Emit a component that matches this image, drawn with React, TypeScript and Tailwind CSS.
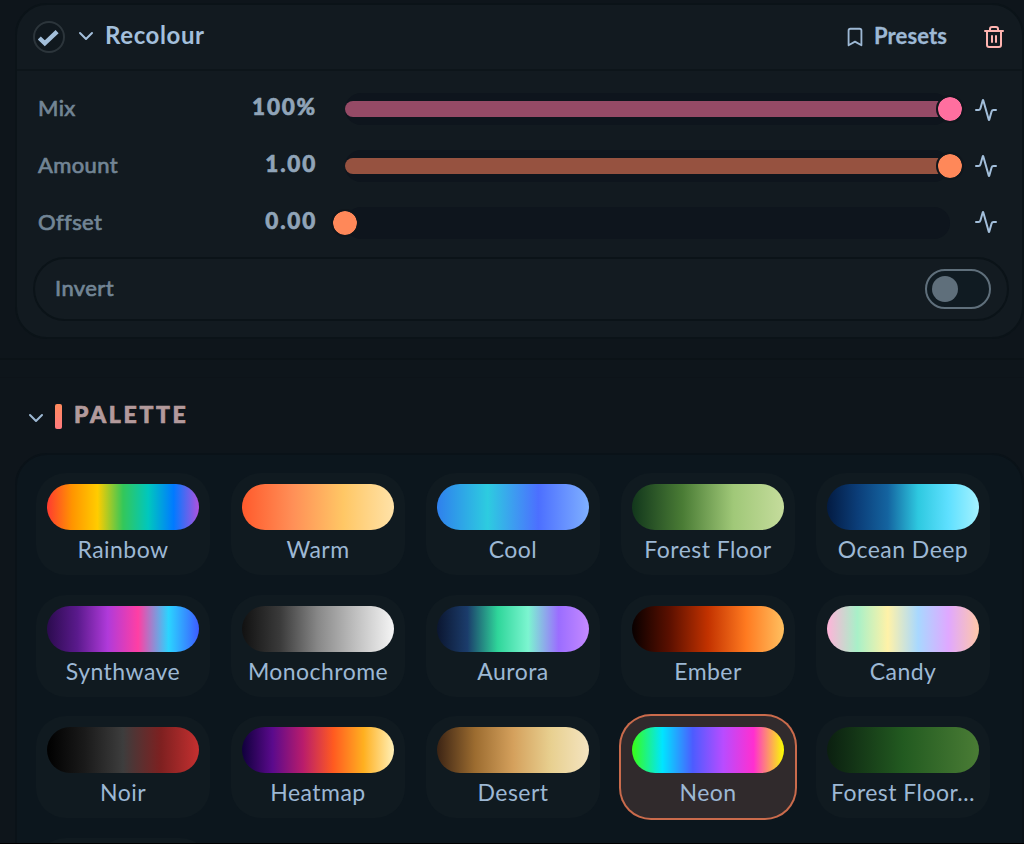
import React from 'react';
import { Activity, Bookmark, ChevronDown, Trash2 } from 'lucide-react';

const sliders = [
  { label: 'Mix', value: '100%', percent: 100, fill: 'bg-[#954a66]', thumb: 'bg-[#ff6f9f]' },
  { label: 'Amount', value: '1.00', percent: 100, fill: 'bg-[#965240]', thumb: 'bg-[#ff8859]' },
  { label: 'Offset', value: '0.00', percent: 0, fill: 'bg-[#965240]', thumb: 'bg-[#ff8859]' },
];

const palettes = [
  { name: 'Rainbow', colors: ['#ff3b30', '#ff9500', '#ffcc00', '#34c759', '#00c7be', '#007aff', '#af52de'] },
  { name: 'Warm', colors: ['#ff5a2c', '#ff8f57', '#ffc765', '#ffe2a8'] },
  { name: 'Cool', colors: ['#2f80ed', '#2dcce0', '#4c6fff', '#7fb0ff'] },
  { name: 'Forest Floor', colors: ['#12371c', '#4a7c35', '#a0c878', '#c5dc9c'] },
  { name: 'Ocean Deep', colors: ['#031b42', '#0b3d78', '#1464a0', '#2ec9e0', '#5fe0ff', '#a5f2ff'] },
  { name: 'Synthwave', colors: ['#2b0b4e', '#5a1a8c', '#b03ada', '#ff3fa4', '#2bd4ff', '#3d5cff'] },
  { name: 'Monochrome', colors: ['#111111', '#3a3a3a', '#888888', '#c0c0c0', '#f5f5f5'] },
  { name: 'Aurora', colors: ['#0b1630', '#1b3c6b', '#2fd69a', '#7cf5d0', '#9b6dff', '#c58aff'] },
  { name: 'Ember', colors: ['#080000', '#5c1000', '#c23200', '#ff7a20', '#ffc060'] },
  { name: 'Candy', colors: ['#ffb3d9', '#a8f0c8', '#fff2a8', '#a8d8ff', '#e0a8ff', '#ffc8a8'] },
  { name: 'Noir', colors: ['#000000', '#1a1a1a', '#3d3d3d', '#7e2020', '#c53030'] },
  { name: 'Heatmap', colors: ['#10003c', '#5a0a8c', '#b81c6c', '#ff5a20', '#ffb020', '#fff0b8'] },
  { name: 'Desert', colors: ['#3c2414', '#9c6c30', '#d4a05c', '#e8d090', '#f4e4c0'] },
  { name: 'Neon', colors: ['#39ff14', '#00e5ff', '#4c5cff', '#b84cff', '#ff2fd0', '#faff00'], selected: true },
  { name: 'Forest Floor…', colors: ['#0b1f10', '#225a20', '#4a7c35'] },
];

const SliderRow = ({ label, value, percent, fill, thumb }) => {
  return (
    <div className="flex items-center h-[57px]">
      <div className="w-[198px] pb-0.5 text-[22px] tracking-[0.4px] text-[#728595] [-webkit-text-stroke:0.7px_#728595]">
        {label}
      </div>
      <div className="w-[81px] pb-[3px] text-right text-[22.5px] font-black tracking-[1.8px] text-[#90a4b8] [-webkit-text-stroke:0.6px_#90a4b8]">
        {value}
      </div>
      <div className="ml-[28px] flex items-center w-[605px] h-8 rounded-full bg-[#0e151d]">
        <div className={`h-4 shrink-0 rounded-l-full ${fill}`} style={{ width: `${percent}%` }} />
        <div className={`-ml-3.5 box-content size-6 shrink-0 rounded-full border-2 border-[#10161c] ${thumb} bg-clip-padding`} />
      </div>
    </div>
  );
};

const PaletteCard = ({ name, colors, selected = false }) => {
  return (
    <div
      className={`h-[102px] px-[11px] pt-[11px] rounded-[30px] ${
        selected ? 'bg-[#302a2c] ring-2 ring-[#ca6b4c]' : 'bg-[#101a20]'
      }`}
    >
      <div
        className="h-[46px] rounded-full"
        style={{ backgroundImage: `linear-gradient(to right, ${colors.join(', ')})` }}
      />
      <div className="mt-[5px] whitespace-nowrap text-center text-[23px] leading-7 tracking-[0.45px] text-[#9db8d4]">
        {name}
      </div>
    </div>
  );
};

export default function App() {
  return (
    <div className="flex flex-col w-[1024px] h-[844px] overflow-hidden border-b border-black bg-[#0e151b] font-['Lato','Open_Sans',sans-serif]">
      <div className="h-[360px] shrink-0 pl-[15px] pt-[3px] border-b-2 border-[#0b1217]">
        <div className="h-[336px] rounded-[32px] border-2 border-[#0b1318] bg-[#121a20]">
          {/* header */}
          <div className="flex items-center h-[66px] pl-4 pr-[18px] border-b-2 border-[#0d151a]">
            <div className="flex items-center justify-center size-8 rounded-full border-2 border-[#2c353b] bg-[#10181e]">
              <svg width="22" height="22" viewBox="0 0 22 22" fill="none" stroke="#a3bfdb" strokeWidth="4.4" className="shrink-0">
                <path d="M1.3 12 6.8 17.3 19.1 5.6" />
              </svg>
            </div>
            <ChevronDown className="ml-[9px] -mt-0.5 text-[#a3bfdb]" size={24} />
            <div className="ml-[7px] pb-1 text-2xl font-bold tracking-[0.6px] text-[#a3bfdb]">Recolour</div>
            <div className="flex items-center ml-auto text-[#9db8d4]">
              <Bookmark size={22} />
              <span className="ml-2 pb-[3px] text-[22px] font-bold tracking-[0.1px] [-webkit-text-stroke:0.3px_#9db8d4]">Presets</span>
            </div>
            <Trash2 className="ml-[35px] -mr-0.5 text-[#ffb4b0]" size={24} />
          </div>
          <div className="flex pl-[21px] pt-[9px]">
            <div>
              {sliders.map((item) => (
                <SliderRow key={item.label} {...item} />
              ))}
            </div>
            <div className="flex flex-col gap-8 ml-6 pt-[18px] text-[#a3bfdb]">
              {sliders.map((item) => (
                <Activity key={item.label} size={24} />
              ))}
            </div>
          </div>
          <div className="flex items-center justify-between h-16 ml-4 mr-[13px] mt-1.5 pl-5 pr-4 rounded-full border-2 border-[#0b1318] bg-[#131b21]">
            <span className="pb-1 text-[22px] tracking-[0.4px] text-[#728595] [-webkit-text-stroke:0.7px_#728595]">Invert</span>
            <div className="flex items-center w-[66px] h-10 pl-[5px] rounded-full border-2 border-[#5f6f7b] bg-[#101b22]">
              <div className="size-[26px] rounded-full bg-[#5f6f7b]" />
            </div>
          </div>
        </div>
      </div>

      <div className="flex items-center h-[76px] mt-[17px] shrink-0 pl-6 border-t border-[#0d1319]">
        <ChevronDown className="mt-1 text-[#9db8d4]" size={24} />
        <div className="ml-[7px] mt-0.5 w-[7px] h-[25px] rounded-[2px] bg-linear-to-b from-[#ff8a5c] to-[#ff7a7e]" />
        <div className="ml-3 pb-[3px] text-[23px] font-black tracking-[2.7px] text-[#b39a9c] [-webkit-text-stroke:0.7px_#b39a9c]">
          PALETTE
        </div>
      </div>

      <div className="ml-[15px] h-[440px] shrink-0 pl-[19px] pt-[18px] rounded-[32px] border-2 border-[#0a1218] bg-[#0c161d]">
        <div className="grid grid-cols-[repeat(5,174px)] gap-x-[21px] gap-y-[19.5px]">
          {palettes.map((item) => (
            <PaletteCard key={item.name} {...item} />
          ))}
          <div className="h-[102px] rounded-[30px] bg-[#101a20]" />
        </div>
      </div>
    </div>
  );
}
